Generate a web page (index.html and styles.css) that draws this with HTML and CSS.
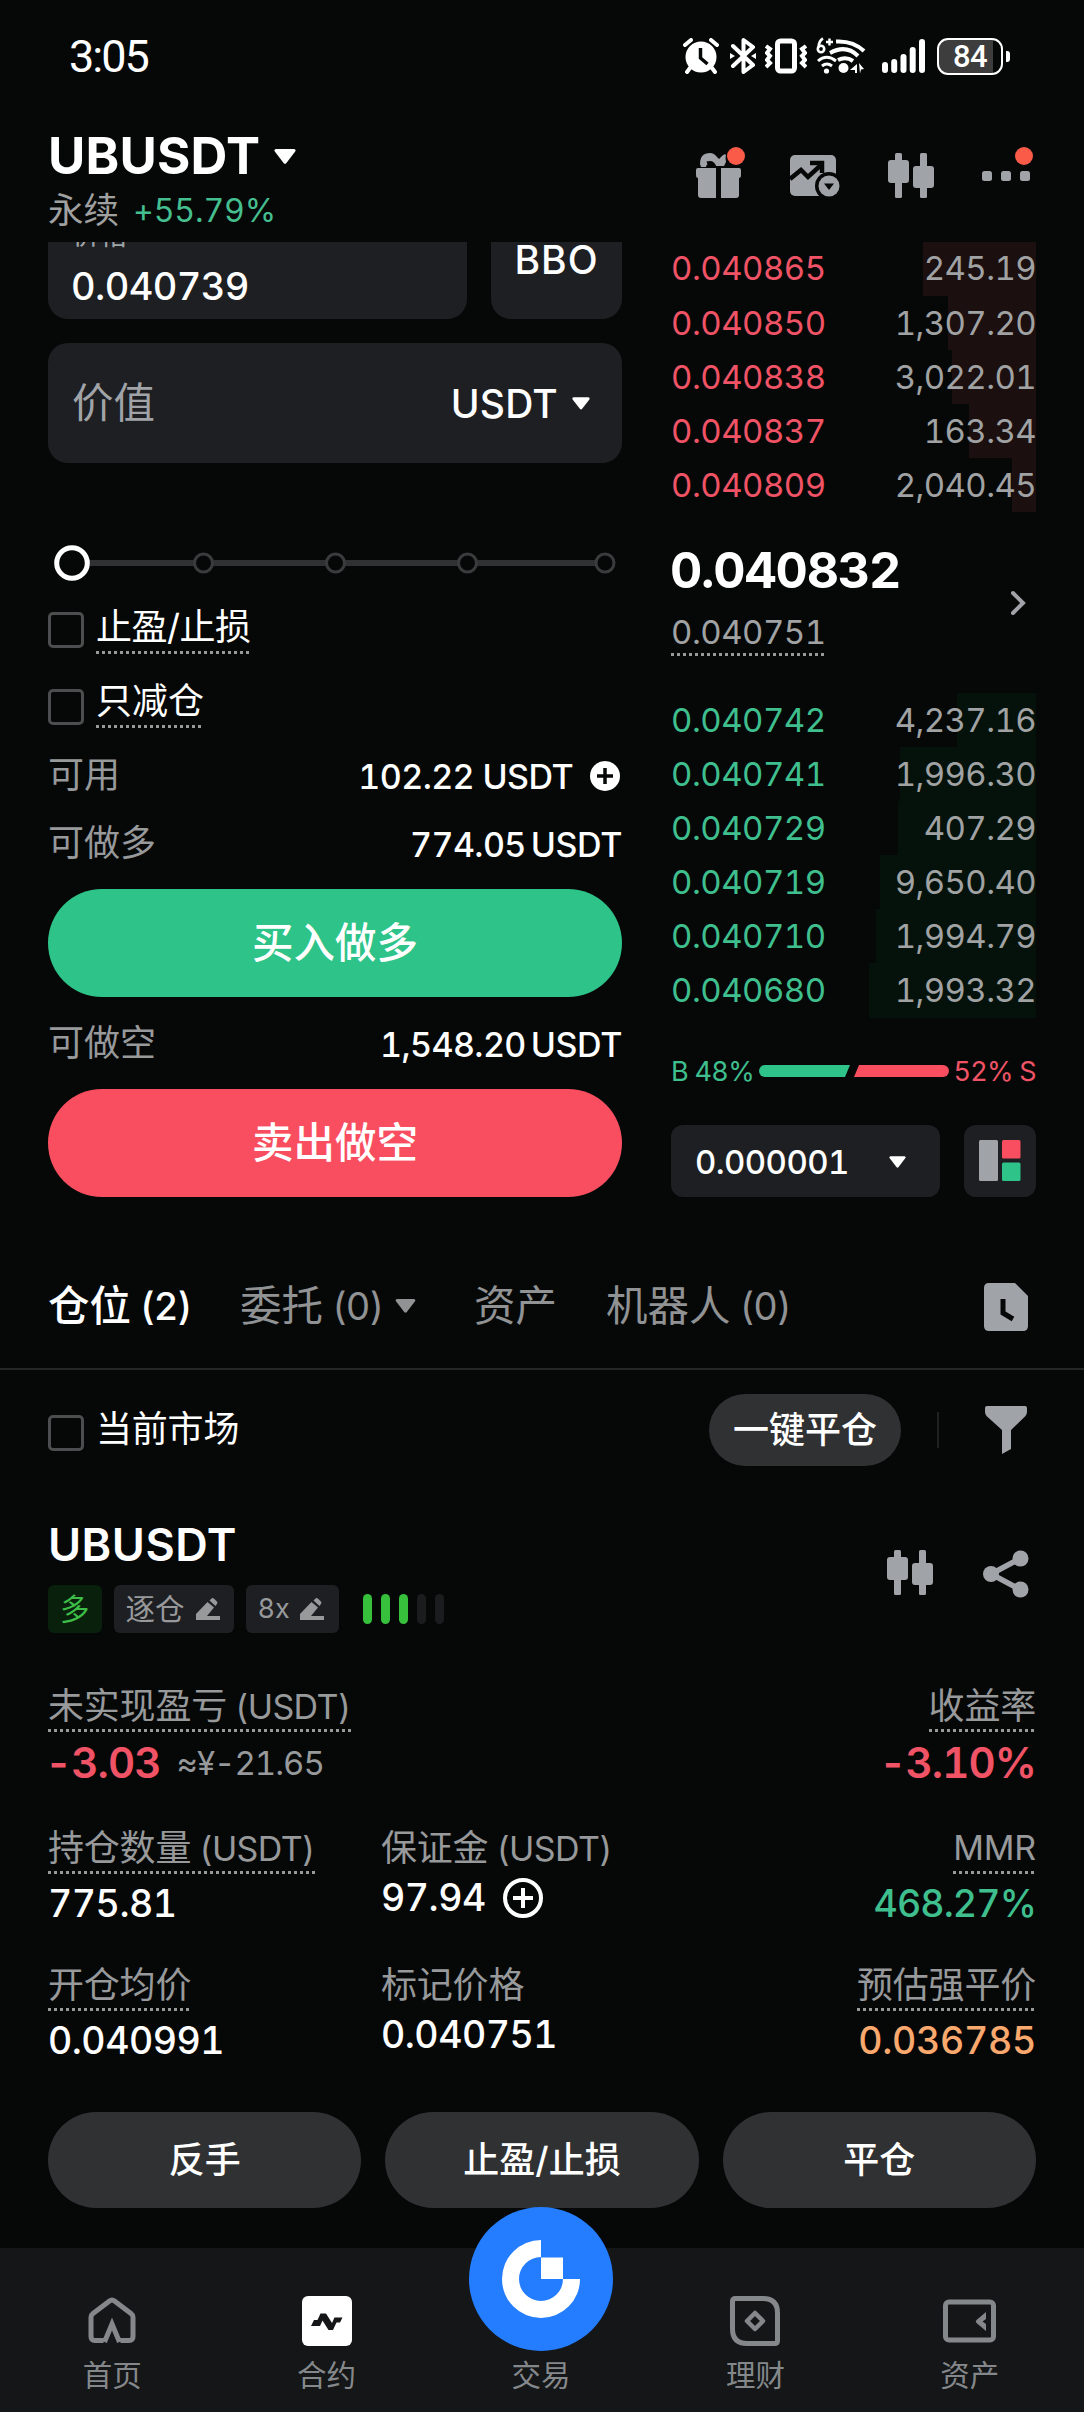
FILE: index.html
```html
<!DOCTYPE html>
<html lang="zh-CN">
<head>
<meta charset="utf-8">
<title>UBUSDT 永续</title>
<link rel="stylesheet" href="styles.css">
</head>
<body>
<svg class="defs" aria-hidden="true">
  <symbol id="candles" viewBox="0 0 46 46">
    <rect x="7" y="0" width="7" height="45" rx="1.5"/><rect x="0" y="7" width="21" height="23" rx="3"/>
    <rect x="32" y="0" width="7" height="45" rx="1.5"/><rect x="25" y="13" width="21" height="22" rx="3"/>
  </symbol>
  <symbol id="caret" viewBox="0 0 22 15">
    <path d="M2 0h18q2.600.6 1 2.800l-8.600 11.200q-1.400 1.700-2.800 0L1 2.800Q-.6.600 2 0z"/>
  </symbol>
  <symbol id="pencil" viewBox="0 0 24 22">
    <path d="M0 22v-6L11.500 4l6.500 5.500-7 8.500H24v4zM13.500 2.500L15.500.6q1.200-1 2.400 0l3 3q1 1.200 0 2.400L19.500 8z"/>
  </symbol>
</svg>

<header class="status">
  <span class="clock">3:05</span>
  <div class="status-icons">
    <svg class="ic-alarm" width="36" height="36" viewBox="0 0 36 36">
      <circle cx="18" cy="19" r="15.500" fill="#fff"/>
      <path d="M2 7l6-5M34 7l-6-5M7 30l-3 4M29 30l3 4" stroke="#fff" stroke-width="4" stroke-linecap="round"/>
      <path d="M17.500 10v10l7 6" fill="none" stroke="#060808" stroke-width="3.500"/>
    </svg>
    <svg class="ic-bt" width="26" height="36" viewBox="0 0 26 36">
      <path d="M3 8l20 19-9.500 7V2L23 9 3 28" fill="none" stroke="#fff" stroke-width="4" stroke-linejoin="round" stroke-linecap="round"/>
      <path d="M0 15l5 3-5 3zM26 15l-5 3 5 3z" fill="#fff"/>
    </svg>
    <svg class="ic-vib" width="42" height="36" viewBox="0 0 42 36">
      <rect x="12.500" y="3" width="17" height="30" rx="3" fill="none" stroke="#fff" stroke-width="5"/>
      <path d="M1 8l4 3-3 4 3 3-3 4 3 3-4 4M41 8l-4 3 3 4-3 3 3 4-3 3 4 4" fill="none" stroke="#fff" stroke-width="4"/>
    </svg>
    <svg class="ic-wifi" width="50" height="38" viewBox="0 0 50 38">
      <g fill="none" stroke="#fff" stroke-width="4">
        <path d="M20 4.500q17-1 28 9.500M14 16q16-9 28 3M22 23q8-4 15 1"/>
        <path d="M2 24q8.500-7.500 18 0M6 29q5-4 10 0" stroke-width="3"/>
        <path d="M7 1.500Q2.500 4 2.500 11" stroke-width="2.600"/><circle cx="5" cy="12" r="3.200" stroke-width="2.600"/>
        <path d="M13.500 1.500v7M10 5h7" stroke-width="2.400"/>
      </g>
      <circle cx="10.500" cy="34" r="2.600" fill="#fff"/><circle cx="27.500" cy="31" r="5" fill="#fff"/>
      <path d="M34 33l7-6v9h-2v-3zM43 26l5 6-3 .5-1 4z" fill="#fff"/>
    </svg>
    <svg class="ic-signal" width="43" height="34" viewBox="0 0 43 34" fill="#fff">
      <rect x="0" y="23" width="6" height="11" rx="3"/><rect x="9.200" y="20" width="6" height="14" rx="3"/>
      <rect x="18.500" y="15" width="6" height="19" rx="3"/><rect x="27.700" y="8" width="6" height="26" rx="3"/>
      <rect x="37" y="0" width="6" height="34" rx="3"/>
    </svg>
    <div class="battery"><span>84</span></div>
    <i class="battery-cap"></i>
  </div>
</header>

<section class="topbar">
  <div class="pair">
    <div class="pair-name">UBUSDT<svg width="22" height="15"><use href="#caret"/></svg></div>
    <div class="pair-sub"><span class="zh">永续</span><span class="chg">+55.79%</span></div>
  </div>
  <div class="tools">
    <span class="tool">
      <svg width="46" height="46" viewBox="0 0 46 46">
        <path d="M4 11Q4 0 14 0q4 0 7 4l2 2 3-3q3-3 4-1-1 3 0 7l-2 4h-9q-3-5-7-2-2 1-2 3H5z"/>
        <path d="M2 15h18v30H5q-3 0-3-3V25q-2 0-2-3v-5q0-2 2-2zM25 15h18q2 0 2 2v5q0 3-2 3v17q0 3-3 3H25z"/>
        <path d="M11 10q6-2 8 4" fill="none" stroke="#060808" stroke-width="3"/>
      </svg>
      <i class="dot"></i>
    </span>
    <span class="tool">
      <svg width="50" height="42" viewBox="0 0 50 42">
        <rect x="0" y="0" width="46" height="41" rx="5"/>
        <path d="M0 24l11-9 7 7L31 10" fill="none" stroke="#060808" stroke-width="4.500"/>
        <path d="M20 8h12v10" fill="none" stroke="#060808" stroke-width="4.500"/>
        <circle cx="39" cy="31" r="14" fill="#060808"/><circle cx="39" cy="31" r="10.500"/>
        <path d="M34 28.500h10L39 35z" fill="#060808"/>
      </svg>
    </span>
    <span class="tool"><svg width="46" height="46"><use href="#candles"/></svg></span>
    <span class="tool">
      <svg width="48" height="10" viewBox="0 0 48 10"><rect width="10" height="10" rx="2.500"/><rect x="19" width="10" height="10" rx="2.500"/><rect x="38" width="10" height="10" rx="2.500"/></svg>
      <i class="dot dot-more"></i>
    </span>
  </div>
</section>

<main class="trade">
  <section class="form">
    <div class="price-row">
      <div class="price-box"><span class="hint">价格</span><span class="val">0.040739</span></div>
      <div class="bbo">BBO</div>
    </div>
    <div class="value-box"><span class="ph">价值</span><span class="unit">USDT<svg width="18" height="13"><use href="#caret"/></svg></span></div>
    <svg class="slider" width="574" height="36" viewBox="0 0 574 36">
      <path d="M24 18H557" stroke="#303133" stroke-width="6"/>
      <g fill="#060808" stroke="#3a3b3d" stroke-width="3">
        <circle cx="155.500" cy="18" r="9"/><circle cx="287.500" cy="18" r="9"/><circle cx="419.500" cy="18" r="9"/><circle cx="557" cy="18" r="9"/>
      </g>
      <circle cx="24" cy="18" r="15.300" fill="#060808" stroke="#fff" stroke-width="5"/>
    </svg>
    <div class="check check-tpsl"><i class="box"></i><span class="dotted">止盈/止损</span></div>
    <div class="check check-reduce"><i class="box"></i><span class="dotted">只减仓</span></div>
    <div class="info avail"><span class="k">可用</span><span class="v">102.22 USDT<svg width="30" height="30" viewBox="0 0 30 30"><circle cx="15" cy="15" r="15" fill="#fff"/><path d="M15 7v16M7 15h16" stroke="#060808" stroke-width="3.500"/></svg></span></div>
    <div class="info long"><span class="k">可做多</span><span class="v tight">774.05<b>USDT</b></span></div>
    <button class="btn buy">买入做多</button>
    <div class="info short"><span class="k">可做空</span><span class="v tight">1,548.20<b>USDT</b></span></div>
    <button class="btn sell">卖出做空</button>
  </section>

  <section class="book">
    <div class="rows asks">
      <div class="row"><i style="width:113px"></i><span>0.040865</span><em>245.19</em></div>
      <div class="row"><i style="width:88px"></i><span>0.040850</span><em>1,307.20</em></div>
      <div class="row"><i style="width:84px"></i><span>0.040838</span><em>3,022.01</em></div>
      <div class="row"><i style="width:67px"></i><span>0.040837</span><em>163.34</em></div>
      <div class="row"><i style="width:24px"></i><span>0.040809</span><em>2,040.45</em></div>
    </div>
    <div class="last">
      <div class="last-col"><strong>0.040832</strong><span class="dotted mark">0.040751</span></div>
      <svg width="20" height="26" viewBox="0 0 20 26"><path d="M5 3l10 10L5 23" fill="none" stroke="#a0a4a8" stroke-width="4" stroke-linecap="round"/></svg>
    </div>
    <div class="rows bids">
      <div class="row"><i style="width:79px"></i><span>0.040742</span><em>4,237.16</em></div>
      <div class="row"><i style="width:136px"></i><span>0.040741</span><em>1,996.30</em></div>
      <div class="row"><i style="width:138px"></i><span>0.040729</span><em>407.29</em></div>
      <div class="row"><i style="width:156px"></i><span>0.040719</span><em>9,650.40</em></div>
      <div class="row"><i style="width:160px"></i><span>0.040710</span><em>1,994.79</em></div>
      <div class="row"><i style="width:167px"></i><span>0.040680</span><em>1,993.32</em></div>
    </div>
    <div class="ratio">
      <span class="up">B 48%</span>
      <svg width="190" height="12" viewBox="0 0 190 12"><path d="M6 0H91L86 12H6A6 6 0 0 1 6 0z" fill="#2dc389"/><path d="M100 0H184A6 6 0 0 1 184 12H95z" fill="#f94e60"/></svg>
      <span class="down">52% S</span>
    </div>
    <div class="book-foot">
      <div class="step">0.000001<svg width="17" height="12"><use href="#caret"/></svg></div>
      <div class="mode"><svg width="42" height="42" viewBox="0 0 42 42"><rect width="19" height="41" rx="1.500" fill="#a0a4a8"/><rect x="23" width="18.500" height="18.500" rx="1.500" fill="#f94e60"/><rect x="23" y="22.500" width="18.500" height="18.500" rx="1.500" fill="#2dc389"/></svg></div>
    </div>
  </section>
</main>

<nav class="tabs">
  <span class="tab on">仓位<small>(2)</small></span>
  <span class="tab t-orders">委托<small>(0)</small><svg width="21" height="14"><use href="#caret"/></svg></span>
  <span class="tab t-assets">资产</span>
  <span class="tab t-bots">机器人<small>(0)</small></span>
  <svg class="history" width="44" height="48" viewBox="0 0 44 48"><path d="M5 0H31L44 13V43q0 5-5 5H5q-5 0-5-5V5Q0 0 5 0z" fill="#a0a4a8"/><path d="M19 16v14l10 6" fill="none" stroke="#060808" stroke-width="5"/></svg>
</nav>

<div class="filter">
  <div class="check"><i class="box"></i><span>当前市场</span></div>
  <div class="filter-right">
    <button class="pill">一键平仓</button>
    <i class="sep"></i>
    <svg width="42" height="48" viewBox="0 0 42 48"><path d="M2 0H40q2 0 2 2V6q0 2-1.500 4L26 24V43l-9 5V24L1.500 10Q0 8 0 6V2Q0 0 2 0z" fill="#a0a4a8"/></svg>
  </div>
</div>

<article class="position">
  <div class="pos-head">
    <div>
      <h2>UBUSDT</h2>
      <div class="tags">
        <span class="tag side">多</span>
        <span class="tag margin">逐仓<svg width="24" height="22"><use href="#pencil"/></svg></span>
        <span class="tag lev">8x<svg width="24" height="22"><use href="#pencil"/></svg></span>
        <span class="risk"><i class="f"></i><i class="f"></i><i class="f"></i><i></i><i></i></span>
      </div>
    </div>
    <div class="pos-tools">
      <svg width="46" height="46"><use href="#candles"/></svg>
      <svg width="46" height="48" viewBox="0 0 46 48"><path d="M38 8L8 24l30 16" fill="none" stroke="#a0a4a8" stroke-width="5.500"/><circle cx="37.500" cy="8.500" r="8"/><circle cx="8" cy="24" r="8"/><circle cx="37.500" cy="39.500" r="8"/></svg>
    </div>
  </div>

  <div class="metrics m1">
    <div class="m"><span class="label dotted">未实现盈亏<small>(USDT)</small></span><div class="num pnl shift">-3.03<small>≈¥-21.65</small></div></div>
    <div class="m end"><span class="label dotted">收益率</span><div class="num pnl">-3.10%</div></div>
  </div>
  <div class="metrics m2">
    <div class="m"><span class="label dotted">持仓数量<small>(USDT)</small></span><div class="num">775.81</div></div>
    <div class="m mid"><span class="label">保证金<small>(USDT)</small></span><div class="num">97.94<svg width="40" height="40" viewBox="0 0 40 40"><g fill="none" stroke="#fff" stroke-width="4"><circle cx="20" cy="20" r="18"/><path d="M20 10v20M10 20h20"/></g></svg></div></div>
    <div class="m end"><span class="label dotted mmr">MMR</span><div class="num green">468.27%</div></div>
  </div>
  <div class="metrics m3">
    <div class="m"><span class="label dotted">开仓均价</span><div class="num">0.040991</div></div>
    <div class="m mid"><span class="label">标记价格</span><div class="num">0.040751</div></div>
    <div class="m end"><span class="label dotted">预估强平价</span><div class="num orange">0.036785</div></div>
  </div>

  <div class="actions"><button>反手</button><button>止盈/止损</button><button>平仓</button></div>
</article>

<footer class="nav">
  <a class="item"><span class="ico"><svg width="48" height="48" viewBox="0 0 48 48"><path d="M15.500 43.500H7q-4 0-4-4V20q0-2 2-3.500L21.500 4q2.500-2 5 0L43 16.500q2 1.500 2 3.500V39.500q0 4-4 4H32.500M16.500 45L24 27l7.500 18" fill="none" stroke="#85888b" stroke-width="5"/></svg></span>首页</a>
  <a class="item"><span class="ico"><svg width="50" height="50" viewBox="0 0 50 50"><rect width="50" height="50" rx="6" fill="#fff"/><path d="M9 30l3-6h3.500L18.500 17.500h5.500L30 27l2.500-5.500H40.500L38 26.500h-3.500L31 34H26.500L20.500 24.500 18 30z" fill="#141617"/></svg></span>合约</a>
  <a class="item center"><span class="ico"></span>交易
    <svg class="fab" width="144" height="144" viewBox="0 0 144 144"><circle cx="72" cy="72" r="72" fill="#247dff"/><path d="M72 33A39 39 0 1 0 111 72H94A22 22 0 1 1 72 50z" fill="#fff"/><rect x="72" y="50.500" width="22" height="21.500" fill="#fff"/></svg>
  </a>
  <a class="item"><span class="ico"><svg width="50" height="50" viewBox="0 0 50 50"><g fill="none" stroke="#85888b" stroke-width="5"><path d="M5.500 2.500H33Q47.500 2.500 47.500 17V44.500q0 3-3 3H17Q2.500 47.500 2.500 33V5.500q0-3 3-3z"/><path d="M25 17l8 8-8 8-8-8z" stroke-width="4.500" stroke-linejoin="round"/></g></svg></span>理财</a>
  <a class="item"><span class="ico"><svg width="53" height="44" viewBox="0 0 53 44"><rect x="2.500" y="3" width="48" height="38" rx="3.500" fill="none" stroke="#85888b" stroke-width="5"/><path d="M43 13v7l-3.500 2.500L43 25v7l-9.500-8q-1.500-1.500 0-3z" fill="#85888b"/></svg></span>资产</a>
</footer>
</body>
</html>
```
FILE: styles.css
```css
* { box-sizing: border-box; }
body {
  margin: 0;
  width: 1084px;
  height: 2412px;
  background: #060808;
  color: #fff;
  font-family: Inter, "Noto Sans CJK SC", sans-serif;
  font-feature-settings: "tnum";
  font-size: 36px;
  letter-spacing: -.5px;
  overflow: hidden;
  display: flex;
  flex-direction: column;
}
svg { display: block; flex: none; fill: currentColor; }
i, em { font-style: normal; }
button { border: 0; padding: 0; color: #fff; font-family: inherit; letter-spacing: 0; }
.defs { position: absolute; width: 0; height: 0; }

/* status bar */
.status { height: 112px; padding: 0 74px 0 69px; display: flex; justify-content: space-between; align-items: center; flex: none; }
.clock { font-family: Roboto, sans-serif; font-size: 45px; letter-spacing: -2px; line-height: 50px; padding-top: 2px; }
.status-icons { display: flex; align-items: center; }
.ic-bt { margin-left: 11px; }
.ic-vib { margin-left: 9px; }
.ic-wifi { margin-left: 9px; }
.ic-signal { margin-left: 16px; }
.battery { margin-left: 12px; width: 66px; height: 37px; border: 2.500px solid #fff; border-radius: 11px; background: linear-gradient(90deg, #3d3d3d 54px, #060808 54px); font: 500 31px/33px Roboto, sans-serif; text-align: center; letter-spacing: -.5px; }
.battery-cap { width: 4px; height: 11px; margin-left: 3px; border-radius: 0 3px 3px 0; background: #fff; }

/* header */
.topbar { height: 130px; flex: none; padding: 0 54px 0 48px; display: flex; justify-content: space-between; align-items: flex-start; }
.pair-name { margin-top: 14px; height: 60px; line-height: 60px; font-size: 51px; font-weight: 700; display: flex; align-items: center; gap: 14px; letter-spacing: .2px; }
.pair-sub { margin-top: 3px; line-height: 44px; display: flex; align-items: center; gap: 14px; color: #a0a0a0; letter-spacing: 0; }
.pair-sub .zh { font-size: 35.500px; line-height: 40px; }
.chg { color: #45bf8f; font-size: 32px; line-height: 44px; letter-spacing: -.1px; }
.tools { display: flex; color: #a0a4a8; align-items: center; height: 46px; margin-top: 41px; }
.tool { position: relative; margin-left: 48px; }
.tool:first-child { margin-left: 0; }
.dot { position: absolute; width: 18px; height: 18px; border-radius: 50%; background: #fa5b48; right: -3px; top: -6px; }
.dot-more { right: -3px; top: -24px; }

/* trade area */
.trade { height: 955px; flex: none; padding: 0 48px; display: flex; justify-content: space-between; overflow: hidden; }
.form { width: 574px; display: flex; flex-direction: column; }
.price-row { height: 77px; overflow: hidden; display: flex; justify-content: space-between; }
.price-box { width: 419px; background: #1e1f22; border-radius: 0 0 20px 20px; padding: 0 24px 13px; display: flex; flex-direction: column; justify-content: flex-end; }
.hint { font-size: 28px; line-height: 34px; color: #a0a4a8; margin-bottom: 14px; }
.val { font-size: 38px; line-height: 40px; font-weight: 500; letter-spacing: -.6px; margin-left: -1px; }
.bbo { width: 131px; background: #1e1f22; border-radius: 0 0 20px 20px; text-align: center; font-size: 39px; font-weight: 500; line-height: 36px; letter-spacing: 1px; }
.value-box { margin-top: 24px; height: 120px; background: #1e1f22; border-radius: 20px; padding: 0 32px 0 24px; display: flex; justify-content: space-between; align-items: center; }
.ph { font-size: 41.500px; color: #a0a4a8; margin-top: -6px; letter-spacing: 0; }
.unit { display: flex; align-items: center; gap: 14px; font-size: 39px; font-weight: 500; letter-spacing: .2px; }
.slider { margin-top: 82px; }
.check { display: flex; gap: 12px; height: 44px; line-height: 34px; }
.box { width: 36px; height: 36px; border: 3px solid #4b4d4e; border-radius: 5px; flex: none; }
.dotted { background: repeating-linear-gradient(90deg, #97999b 0 3px, transparent 3px 6px) left bottom / 100% 3px no-repeat; }
.check-tpsl { margin-top: 29px; }
.check-tpsl .box { margin-top: 2px; }
.check-reduce { margin-top: 30px; letter-spacing: 0; }
.check-reduce .box { margin-top: 5px; }
.info { height: 50px; display: flex; justify-content: space-between; align-items: center; }
.k { color: #97999b; margin-top: -8px; letter-spacing: 0; }
.v { font-size: 34px; font-weight: 500; display: flex; align-items: center; letter-spacing: -.6px; }
.v svg { margin: 0 2px 0 17px; }
.v b { font-weight: 500; margin-left: 5px; letter-spacing: -.4px; }
.avail { margin-top: 23px; }
.long { margin-top: 18px; }
.short { margin-top: 22px; }
.btn { margin-top: 20px; height: 108px; border-radius: 54px; font-size: 41.500px; font-weight: 500; line-height: 104px; }
.buy { background: #2dc389; }
.sell { background: #f94e60; }

/* order book */
.book { width: 365px; }
.row { position: relative; height: 54.200px; line-height: 54px; display: flex; justify-content: space-between; font-size: 33px; }
.row i { position: absolute; right: 0; top: 0; bottom: 0; }
.row span, .row em { position: relative; }
.row em { color: #a0a2a3; letter-spacing: -.6px; }
.asks { height: 271px; margin-top: -.6px; }
.asks .row i { background: #1b0f0f; }
.asks .row span { color: #ef5365; }
.bids .row i { background: #04120b; }
.bids .row span { color: #3fbf8e; }
.last { margin-top: 32.600px; height: 111px; display: flex; justify-content: space-between; align-items: center; padding-right: 8px; }
.last svg { margin-top: 4px; }
.last-col { display: flex; flex-direction: column; align-items: flex-start; }
.last strong { font-size: 50px; line-height: 50px; letter-spacing: -1.200px; margin-left: -1px; }
.mark { margin-top: 20px; height: 41px; line-height: 34px; font-size: 33px; color: #a0a2a3; }
.bids { margin-top: 36.500px; }
.ratio { margin-top: 37.500px; height: 32px; display: flex; justify-content: space-between; align-items: center; font-size: 27px; white-space: nowrap; letter-spacing: -.7px; }
.ratio svg { margin-top: -1px; }
.up { color: #3fbf8e; }
.down { color: #ef5365; }
.book-foot { margin-top: 38px; display: flex; justify-content: space-between; }
.step { width: 269px; height: 72px; border-radius: 12px; background: #1e1f22; padding: 1px 34px 0 24px; display: flex; justify-content: space-between; align-items: center; font-size: 33px; font-weight: 500; letter-spacing: -.6px; }
.mode { width: 72px; height: 72px; border-radius: 12px; background: #1e1f22; display: flex; align-items: center; justify-content: center; }

/* tabs */
.tabs { height: 173px; flex: none; border-bottom: 2px solid #242627; padding: 45px 56px 0 48px; display: flex; align-items: flex-start; line-height: 128px; color: #909294; font-size: 41.500px; letter-spacing: 0; }
.tab { display: flex; align-items: center; height: 128px; }
.tab small { font-size: 38px; margin-left: 9px; letter-spacing: -1px; }
.on { color: #fff; font-weight: 500; width: 192px; }
.tab svg { margin-left: 12px; }
.t-orders { width: 234px; }
.t-assets { width: 132px; }
.history { margin: 41px 0 0 auto; }

/* filter row */
.filter { margin-top: 24px; height: 72px; flex: none; padding: 0 57px 0 48px; display: flex; justify-content: space-between; align-items: center; }
.filter .box { margin-top: 3px; }
.filter .check { height: 36px; letter-spacing: -.2px; }
.filter-right { display: flex; align-items: center; }
.pill { width: 192px; height: 72px; border-radius: 36px; background: #303133; font-size: 36px; font-weight: 500; line-height: 70px; }
.sep { width: 2px; height: 36px; margin: 0 46px 0 36px; background: #1e2022; }

/* position */
.position { padding: 0 48px; flex: none; height: 782px; }
.pos-head { display: flex; justify-content: space-between; align-items: flex-start; padding-top: 54px; height: 222px; }
.pos-head h2 { margin: 0; font-size: 45px; line-height: 50px; font-weight: 600; letter-spacing: .5px; }
.tags { margin-top: 15px; display: flex; align-items: center; }
.tag { height: 48px; border-radius: 6px; background: #1e1f22; color: #97999b; font-size: 29.500px; line-height: 46px; display: flex; align-items: center; padding: 0 12px; margin-right: 12px; justify-content: space-between; letter-spacing: 0; }
.side { background: #08200c; color: #3dbd47; }
.margin { width: 120px; padding-right: 14px; }
.lev { width: 93px; font-size: 27px; padding-right: 15px; }
.risk { display: flex; gap: 9px; margin-left: 12px; }
.risk i { width: 9px; height: 30px; border-radius: 4.500px; background: #1a1c1d; }
.risk .f { background: #36c03c; }
.pos-tools { display: flex; gap: 50px; color: #a0a4a8; padding: 30px 7px 0 0; }
.metrics { display: grid; grid-template-columns: 333px 1fr auto; height: 137px; }
.m1 { grid-template-columns: 1fr auto; height: 142px; }
.m { display: flex; flex-direction: column; align-items: flex-start; }
.end { align-items: flex-end; }
.label { height: 44px; line-height: 36px; color: #97999b; white-space: nowrap; letter-spacing: -.2px; }
.label small { font-size: 34px; margin-left: 8px; letter-spacing: -.6px; }
.mmr { font-size: 34px; }
.num { margin-top: 10px; height: 40px; line-height: 40px; font-size: 37.500px; font-weight: 500; display: flex; align-items: center; letter-spacing: -.5px; }
.mid .num { margin-top: 4px; }
.num svg { margin-left: 17px; }
.m .pnl { color: #ef5365; font-size: 42px; font-weight: 600; margin-top: 11px; letter-spacing: -.9px; }
.m .shift { margin-left: -3px; }
.pnl small { margin-left: 16px; font-size: 33px; font-weight: 400; color: #97999b; letter-spacing: -1px; }
.m .green { color: #3fbf8e; letter-spacing: -.9px; }
.m .orange { color: #faa96e; letter-spacing: -.3px; }
.actions { display: flex; gap: 24px; margin-top: 8px; }
.actions button { flex: 1; height: 96px; border-radius: 48px; background: #303133; font-size: 36px; font-weight: 500; line-height: 94px; }

/* bottom navigation */
.nav { height: 164px; flex: none; padding: 0 7px 0 5px; background: #141617; display: flex; }
.item { position: relative; flex: 1; display: flex; flex-direction: column; align-items: center; font-size: 29.500px; line-height: 36px; color: #85888b; letter-spacing: 0; }
.ico { height: 50px; margin: 48px 0 11px; display: flex; align-items: center; }
.fab { position: absolute; top: -41px; left: 50%; margin-left: -72px; }
```
